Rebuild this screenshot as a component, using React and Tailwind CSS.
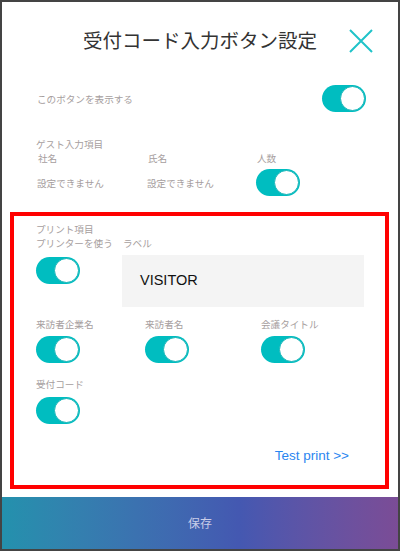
function Toggle() {
  return (
    <div className="w-[44px] h-[27px] rounded-full bg-[#00bdc0] flex items-center justify-end pr-[1px] shrink-0">
      <div className="w-[25px] h-[25px] rounded-full bg-white border border-[#17b5b8]"></div>
    </div>
  );
}

function Label({ children, className = "" }) {
  return (
    <div className={"text-[9.6px] leading-[14px] text-[#a69e9e] whitespace-nowrap " + className}>
      {children}
    </div>
  );
}

export default function App() {
  const jp = { fontFamily: '"Noto Sans CJK JP", "Noto Sans", sans-serif' };

  return (
    <div
      className="w-[400px] h-[551px] border-2 border-[#444444] bg-white flex flex-col overflow-hidden"
      style={jp}
    >
      {/* Header */}
      <div className="relative h-[76px] flex items-center justify-center shrink-0">
        <h1 className="text-[19.5px] leading-[28px] text-[#333333] font-normal">
          受付コード入力ボタン設定
        </h1>
        <button className="absolute right-[24px] top-[26px] w-[26px] h-[26px]">
          <svg viewBox="0 0 26 26" className="w-[26px] h-[26px]">
            <path d="M2 2 L24 24 M24 2 L2 24" stroke="#1fc3c9" strokeWidth="2" fill="none" />
          </svg>
        </button>
      </div>

      {/* Show button row */}
      <div className="mt-[7px] pl-[35px] pr-[32px] flex items-center justify-between">
        <Label>このボタンを表示する</Label>
        <Toggle />
      </div>

      {/* Guest input */}
      <div className="mt-[25px] pl-[34px]">
        <Label>ゲスト入力項目</Label>
        <div className="grid grid-cols-[110px_109px_auto] pl-[2px]">
          <Label>社名</Label>
          <Label>氏名</Label>
          <Label>人数</Label>
        </div>
        <div className="mt-[4px] grid grid-cols-[110px_109px_auto] items-center pl-[1px]">
          <Label>設定できません</Label>
          <Label>設定できません</Label>
          <Toggle />
        </div>
      </div>

      {/* Print section */}
      <div className="mt-[16px] ml-[8px] mr-[9px] border-4 border-[#ff0000] pt-[6px] pb-[20px] pl-[22px]">
        <Label>プリント項目</Label>
        <div className="flex">
          <Label className="w-[87px]">プリンターを使う</Label>
          <Label>ラベル</Label>
        </div>
        <div className="mt-[5px] flex items-start">
          <div className="mt-[2px] w-[86px]">
            <Toggle />
          </div>
          <div
            className="w-[242px] h-[52px] bg-[#f4f4f4] flex items-center pl-[18px] text-[14.5px] text-[#111111]"
            style={{ fontFamily: '"Liberation Sans", Arial, sans-serif' }}
          >
            VISITOR
          </div>
        </div>

        <div className="mt-[10px] grid grid-cols-[109px_116px_auto]">
          <Label>来訪者企業名</Label>
          <Label>来訪者名</Label>
          <Label>会議タイトル</Label>
        </div>
        <div className="mt-[5px] grid grid-cols-[109px_116px_auto]">
          <Toggle />
          <Toggle />
          <Toggle />
        </div>

        <Label className="mt-[14px]">受付コード</Label>
        <div className="mt-[6px]">
          <Toggle />
        </div>

        <div className="mt-[23px] mr-[36px] flex justify-end">
          <a
            className="text-[13.5px] leading-[18px] text-[#2a86f0]"
            style={{ fontFamily: '"Liberation Sans", Arial, sans-serif' }}
          >
            Test print &gt;&gt;
          </a>
        </div>
      </div>

      {/* Footer */}
      <div className="mt-auto h-[52px] shrink-0 bg-linear-to-r from-[#2391ad] via-[#4458b1] via-60% to-[#7b4c96] flex items-center justify-center">
        <span className="text-[12px] text-[#c9cde8]">保存</span>
      </div>
    </div>
  );
}
